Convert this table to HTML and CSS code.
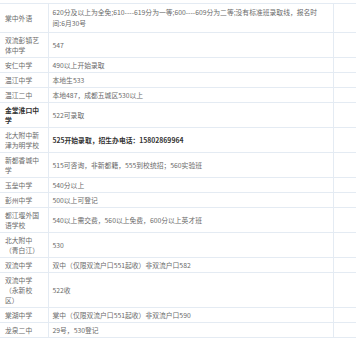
FILE: index.html
```html
<!DOCTYPE html>
<html lang="zh">
<head>
<meta charset="utf-8">
<link rel="stylesheet" href="styles.css">
</head>
<body>
<table class="score-table">
<colgroup><col class="c-name"><col class="c-info"><col class="c-extra"></colgroup>
<tr><td>棠中外语</td><td>620分及以上为全免;610----619分为一等;600----609分为二等;没有标准班录取线，报名时间:6月30号</td><td></td></tr>
<tr><td>双流彭镇艺体中学</td><td>547</td><td></td></tr>
<tr><td>安仁中学</td><td>490以上开始录取</td><td></td></tr>
<tr><td>温江中学</td><td>本地生533</td><td></td></tr>
<tr><td>温江二中</td><td>本地487，成都五城区530以上</td><td></td></tr>
<tr><td class="strong">金堂淮口中学</td><td>522可录取</td><td></td></tr>
<tr><td>北大附中新津为明学校</td><td class="strong">525开始录取，招生办电话：15802869964</td><td></td></tr>
<tr><td>新都香城中学</td><td>515可咨询，非新都籍，555到校统招；560实验班</td><td></td></tr>
<tr><td>玉垒中学</td><td>540分以上</td><td></td></tr>
<tr><td>彭州中学</td><td>500以上可登记</td><td></td></tr>
<tr><td>都江堰外国语学校</td><td>540以上需交费，560以上免费，600分以上英才班</td><td></td></tr>
<tr><td>北大附中<br>（青白江）</td><td>530</td><td></td></tr>
<tr><td>双流中学</td><td>双中（仅限双流户口551起收）非双流户口582</td><td></td></tr>
<tr><td>双流中学<br>（永新校<br>区）</td><td>522收</td><td></td></tr>
<tr><td>棠湖中学</td><td>棠中（仅限双流户口551起收）非双流户口590</td><td></td></tr>
<tr><td>龙泉二中</td><td>29号，530登记</td><td></td></tr>
</table>
</body>
</html>
```
FILE: styles.css
```css
html, body {
  margin: 0;
  padding: 0;
  background: #ffffff;
}
body {
  overflow: hidden;
  width: 356px;
  height: 340px;
}
.score-table {
  margin-top: 3px;
  border-collapse: collapse;
  table-layout: fixed;
  width: 380px;
  font-family: "Noto Sans CJK SC", "Noto Sans", sans-serif;
  font-size: 6.8px;
  line-height: 10px;
  color: #6a6a6a;
  text-spacing-trim: space-all;
}
.c-name { width: 48px; }
.c-info { width: 285px; }
.c-extra { width: 47px; }
.score-table td {
  border: 1px solid #e4ebf3;
  padding: 2px 8px 2px 5px;
  vertical-align: middle;
  word-break: normal;
}
.score-table td + td {
  padding-left: 4px;
}
.score-table tr:first-child td {
  padding-top: 3px;
  padding-bottom: 3px;
  line-height: 11px;
}
.score-table tr td:first-child {
  border-left: none;
  padding-right: 3px;
}
.score-table .strong {
  color: #333333;
  font-weight: bold;
}
```
